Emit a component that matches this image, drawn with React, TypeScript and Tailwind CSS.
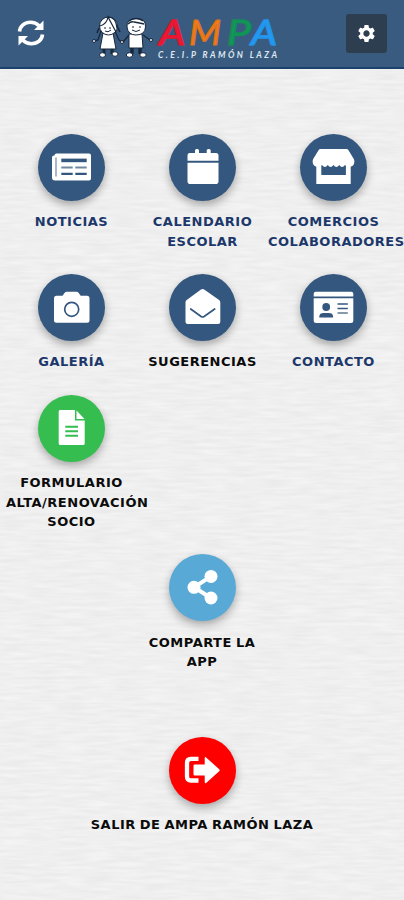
import React from 'react';
import { MdSettings } from 'react-icons/md';

type IconName = 'news' | 'calendar' | 'store' | 'camera' | 'mail' | 'contact' | 'document' | 'share' | 'exit';

interface TileProps {
  icon: IconName;
  label: string;
  circle?: string;
  text?: string;
  width?: string;
}

const NAVY = '#34577f';

// All tile icons are drawn on the 67x67 circle
const icons: Record<IconName, React.ReactNode> = {
  news: (
    <>
      <path d="M18.5 19.5H51a2 2 0 0 1 2 2v23a2 2 0 0 1-2 2H17a3 3 0 0 1-3-3v-20a2 2 0 0 1 2-2h.5a2 2 0 0 1 2-2z" fill="#fff" />
      <path d="M18 23.5v19" stroke="#7c92ad" strokeWidth="1.3" />
      <path d="M23.3 24.6h25.4v3.6H23.3z" fill={NAVY} />
      <path d="M23.3 33.6h11.4M37.3 33.6h11.4" stroke="#71889f" strokeWidth="2" />
      <path d="M23.3 39.9h11.4M37.3 39.9h11.4" stroke={NAVY} strokeWidth="2.3" />
    </>
  ),
  calendar: (
    <>
      <path d="M20 19h6v-2.5a1.5 1.5 0 0 1 1.5-1.5h1a1.5 1.5 0 0 1 1.5 1.5V19h7.7v-2.5a1.5 1.5 0 0 1 1.5-1.5h1a1.5 1.5 0 0 1 1.5 1.5V19H47a2.5 2.5 0 0 1 2.5 2.5v5.2h-31v-5.2A2.5 2.5 0 0 1 20 19z" fill="#fff" />
      <path d="M18.5 28.8h31v18.4a2.8 2.8 0 0 1-2.8 2.8H21.3a2.8 2.8 0 0 1-2.8-2.8z" fill="#fff" />
    </>
  ),
  store: (
    <>
      <path d="M16.3 30h34.4v20H16.3z" fill="#fff" />
      <path d="M21.3 30.5h24.6V41H21.3z" fill={NAVY} />
      <path
        d="M20.5 15h26q1.300 0 2 1.200l5.300 8.800q1.200 2.200.3 4.600-1.200 3.200-4.600 3.300-2.600 0-4.500-2-2.900 4-5.750 0-2.900 4-5.750 0-2.900 4-5.750 0-2.900 4-5.750 0-1.900 2-4.500 2-3.400-.1-4.600-3.300-.9-2.400.3-4.600l5.300-8.800q.7-1.200 2-1.200z"
        fill="#fff"
      />
    </>
  ),
  camera: (
    <>
      <path d="M18.5 21.7h6l2.200-3q.7-1 2-1h9.800q1.300 0 2 1l2.200 3h6.300a2.500 2.500 0 0 1 2.500 2.500v22a2.500 2.500 0 0 1-2.500 2.500H18.500a2.500 2.500 0 0 1-2.500-2.500v-22a2.500 2.500 0 0 1 2.500-2.500z" fill="#fff" />
      <circle cx="33.7" cy="35.3" r="7" fill="none" stroke={NAVY} strokeWidth="1.7" />
    </>
  ),
  mail: (
    <>
      <path d="M16.5 28.500q0-1.500 1.200-2.400L32 15.500q1.600-1.200 3.200 0l14.900 10.600q1.200.9 1.200 2.400v19a2.500 2.500 0 0 1-2.500 2.500H19a2.500 2.500 0 0 1-2.500-2.500z" fill="#fff" />
      <path d="M21.700 35l10.400 7.500q1.500 1 3 0L45.700 35" fill="none" stroke={NAVY} strokeWidth="1.7" strokeLinecap="round" />
    </>
  ),
  contact: (
    <>
      <path d="M15.700 17.700h35.600a2 2 0 0 1 2 2v2.900H13.700v-2.900a2 2 0 0 1 2-2zM13.700 24.300h39.600v22.200a2.500 2.500 0 0 1-2.500 2.500H16.200a2.500 2.500 0 0 1-2.500-2.500z" fill="#fff" />
      <circle cx="26.2" cy="33" r="3.9" fill={NAVY} />
      <path d="M19.200 43.400q0-4.300 4.300-4.300h5.400q4.300 0 4.300 4.300z" fill={NAVY} />
      <path d="M37.500 30h10.300M37.500 34.500h10.300" stroke={NAVY} strokeWidth="1.7" />
      <path d="M37.500 39h10.300" stroke="#71889f" strokeWidth="1.7" />
    </>
  ),
  document: (
    <>
      <path d="M22 15h15v10.500h9.700v23a1.500 1.500 0 0 1-1.500 1.500H22.200a1.500 1.500 0 0 1-1.500-1.500v-32A1.500 1.500 0 0 1 22 15z" fill="#fff" />
      <path d="M38.500 15.500l8 8.400h-8z" fill="#fff" />
      <path d="M27.300 31.700H40M27.300 36.200H40M27.300 40.700H40" stroke="#35bd50" strokeWidth="1.9" />
    </>
  ),
  share: (
    <>
      <path d="M42 22.400L25 33.300 42 44" fill="none" stroke="#fff" strokeWidth="4" />
      <circle cx="42" cy="22.4" r="6.5" fill="#fff" />
      <circle cx="25" cy="33.3" r="6.5" fill="#fff" />
      <circle cx="42" cy="44" r="6.5" fill="#fff" />
    </>
  ),
  exit: (
    <>
      <path d="M29.500 21.900H22q-4 0-4 4v13.600q0 4 4 4h7.500" fill="none" stroke="#fff" strokeWidth="4.3" />
      <path d="M25.700 27.500H35.700v-6q0-2.300 1.700-.8l12.800 11.500q1 1 0 2L37.400 45.700q-1.700 1.400-1.700-.9v-6.300h-10q-1.200 0-1.200-1.200v-8.600q0-1.200 1.200-1.200z" fill="#fff" />
    </>
  ),
};

const Tile: React.FC<TileProps> = ({ icon, label, circle = 'bg-[#34577f]', text = 'text-[#1c386b]', width = 'w-[131px]' }) => (
  <button className={`flex flex-col items-center shrink-0 gap-[11.5px] ${width}`}>
    <span className={`block w-[67px] h-[67px] rounded-full shadow-[0_4px_9px_rgba(0,0,0,0.3)] ${circle}`}>
      <svg viewBox="0 0 67 67" className="w-full h-full" aria-hidden="true">
        {icons[icon]}
      </svg>
    </span>
    <span className={`w-full text-center text-[13px] leading-[19.5px] font-bold tracking-[0.5px] [word-spacing:-1px] ${text}`}>{label}</span>
  </button>
);

const RefreshIcon = () => (
  <svg viewBox="0 0 28 28" className="w-7 h-7" fill="none" aria-hidden="true">
    <path d="M2.500 12.500C3 7 7.500 3.200 13.500 3.200c3.500 0 6.300 1.200 8.500 3.500M25.500 15.500c-.5 5.500-5 9.300-11 9.300-3.500 0-6.300-1.200-8.500-3.500" stroke="#fff" strokeWidth="3.6" />
    <path d="M26.500 1.500v9.500h-9.500zM1.500 26.500v-9.500h9.500z" fill="#fff" />
  </svg>
);

const Logo = () => (
  <svg viewBox="0 0 190 52" className="w-[190px] h-[52px]" aria-label="AMPA C.E.I.P Ramón Laza">
    {/* girl */}
    <g stroke="#17283e" strokeWidth="1">
      <path d="M10 22l-3 9-4 1M24 22l4 9 3 2" fill="none" strokeWidth="1.3" />
      <path d="M8 19l-2 5M26 17l3 6" fill="none" strokeWidth="1.6" />
      <path d="M13 39v6M21 39v6" strokeWidth="3" />
      <path d="M12 24h10l3 16H9z" fill="#fff" />
      <circle cx="17.5" cy="17" r="9" fill="#fff" />
      <path d="M9 17q7-2 8-9l8 15M17 8q8 0 9 11" fill="none" strokeWidth="1.2" />
      <path d="M13 19h2M18 19h2M14 22q3 2 6-1" fill="none" />
      <ellipse cx="11.5" cy="46" rx="3" ry="2.3" fill="#fff" />
      <ellipse cx="24" cy="45" rx="3" ry="2.3" fill="#fff" />
      <circle cx="3" cy="32" r="1.5" fill="#fff" />
      <circle cx="31" cy="33" r="1.5" fill="#fff" />
    </g>
    {/* boy */}
    <g stroke="#17283e" strokeWidth="1">
      <path d="M38 26l-6 7M52 26l7 5" fill="none" strokeWidth="1.4" />
      <path d="M41 38v7M49 38v7" strokeWidth="3.5" />
      <path d="M38 25h13l1 14H38z" fill="#fff" />
      <path d="M36 18q-1-8 9-8.500Q55 9 54.500 18 54 26 45 26 37 26 36 18z" fill="#fff" />
      <path d="M37 15q3-3 6-2 6 1 10 2M38 12q7-5 14 0" fill="none" strokeWidth="1.3" />
      <path d="M41 18h2M48 18h2M41 21q4 3 8 0" fill="none" />
      <ellipse cx="38.5" cy="46" rx="3.2" ry="2.3" fill="#fff" />
      <ellipse cx="52" cy="46" rx="3.2" ry="2.3" fill="#fff" />
      <circle cx="60" cy="31" r="1.5" fill="#fff" />
    </g>
    <g fontFamily="Lato, sans-serif" fontStyle="italic" fontWeight="400" fontSize="34" strokeLinejoin="round">
      <text x="68" y="36" textLength="26" lengthAdjust="spacingAndGlyphs" fill="#f31632" stroke="#e21833" strokeWidth="1.4">A</text>
      <text x="98" y="36" textLength="32" lengthAdjust="spacingAndGlyphs" fill="#f27b18" stroke="#dc731d" strokeWidth="1.2">M</text>
      <text x="136" y="36" textLength="24" lengthAdjust="spacingAndGlyphs" fill="#11995a" stroke="#128e57" strokeWidth="1.4">P</text>
      <text x="160" y="36" textLength="26" lengthAdjust="spacingAndGlyphs" fill="#229bf5" stroke="#2393e9" strokeWidth="1.4">A</text>
    </g>
    <text x="67" y="48.5" textLength="119" fontFamily="Lato, sans-serif" fontStyle="italic" fontWeight="700" fontSize="8.5" fill="#dfe8f2">
      C.E.I.P RAMÓN LAZA
    </text>
  </svg>
);

const PaperTexture = () => (
  <svg className="absolute inset-0 w-full h-full -z-10" aria-hidden="true">
    <filter id="paper" x="0" y="0" width="100%" height="100%" colorInterpolationFilters="sRGB">
      <feTurbulence type="fractalNoise" baseFrequency="0.035 0.3" numOctaves="2" seed="4" />
      <feColorMatrix values="0.06 0 0 0 0.907  0.06 0 0 0 0.907  0.06 0 0 0 0.907  0 0 0 0 1" />
    </filter>
    <rect width="100%" height="100%" filter="url(#paper)" />
  </svg>
);

const App: React.FC = () => (
  <div className="relative isolate w-full h-[900px] overflow-hidden bg-[#eee] font-['DejaVu_Sans',sans-serif]">
    <PaperTexture />

    <header className="flex items-start h-[69px] bg-[#3a5b80] border-b-2 border-[#1b426f] px-[17px]">
      <button className="mt-[19px]" aria-label="Actualizar">
        <RefreshIcon />
      </button>
      <div className="ml-[46px] mt-[9px]">
        <Logo />
      </div>
      <button className="ml-auto mt-[14px] w-[41px] h-[39px] rounded-[3px] bg-[#2c3e50] flex items-center justify-center" aria-label="Ajustes">
        <MdSettings className="w-[21px] h-[21px] text-white" />
      </button>
    </header>

    <main className="pt-[64.5px] px-[6px] flex flex-col gap-[22.5px]">
      <div className="flex">
        <Tile icon="news" label="NOTICIAS" />
        <Tile icon="calendar" label="CALENDARIO ESCOLAR" />
        <Tile icon="store" label="COMERCIOS COLABORADORES" />
      </div>
      <div className="flex">
        <Tile icon="camera" label="GALERÍA" />
        <Tile icon="mail" label="SUGERENCIAS" text="text-[#0b0b0b]" />
        <Tile icon="contact" label="CONTACTO" />
      </div>
      <div className="flex mt-[0.5px]">
        <Tile icon="document" label="FORMULARIO ALTA/RENOVACIÓN SOCIO" circle="bg-[#35bd50]" text="text-[#0b0b0b]" />
      </div>
      <div className="flex justify-center">
        <Tile icon="share" label="COMPARTE LA APP" circle="bg-[#58a9d5]" text="text-[#0b0b0b]" />
      </div>
      <div className="flex justify-center mt-[42.5px]">
        <Tile icon="exit" label="SALIR DE AMPA RAMÓN LAZA" circle="bg-[#fe0000]" text="text-[#0b0b0b]" width="w-[262px]" />
      </div>
    </main>
  </div>
);

export default App;
